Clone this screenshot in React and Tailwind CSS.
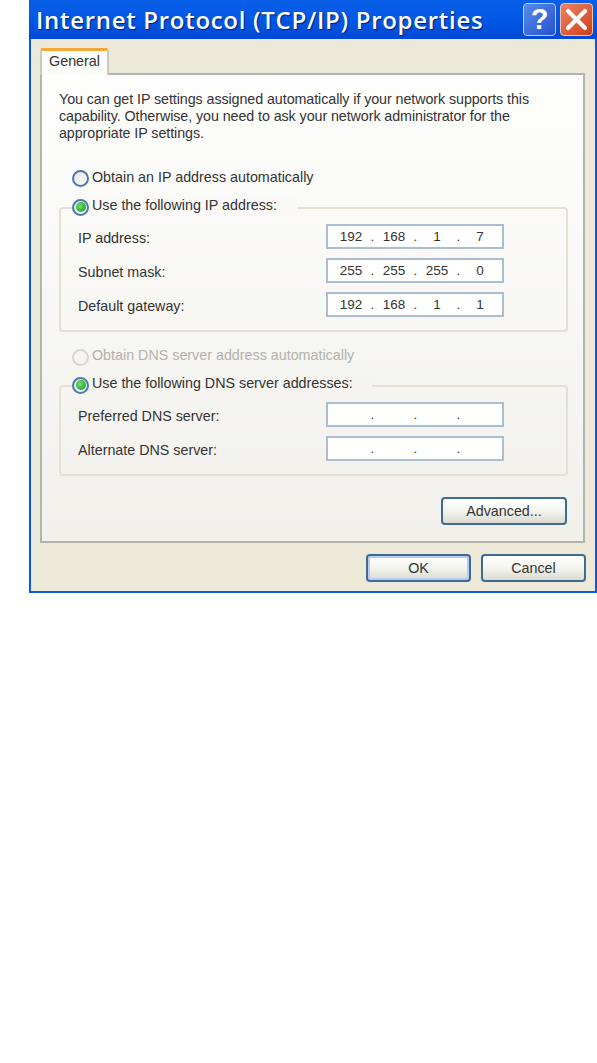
const font = { fontFamily: '"Liberation Sans", Arial, sans-serif' };

function Radio({ checked, disabled }) {
  const ring = disabled ? "border-[#d8d7ce]" : "border-[#4d7aa8]";
  const fill = disabled ? "bg-[#f5f4f0]" : "bg-gradient-to-br from-[#e4e3da] to-white";
  return (
    <span className={`flex h-[17px] w-[17px] shrink-0 items-center justify-center rounded-full border-2 ${ring} ${fill}`}>
      {checked && <span className="h-[10px] w-[10px] rounded-full bg-[radial-gradient(circle_at_40%_40%,#6fe06f,#23a82f_75%)]" />}
    </span>
  );
}

function IpField({ values }) {
  const cell = "w-[36px] text-center";
  const dot = "w-[7px] text-center";
  return (
    <div className="flex h-[25px] w-[178px] items-center border-2 border-[#a9bdd3] bg-white pl-[5px] text-[13.5px] text-[#333]">
      <span className={cell}>{values[0]}</span>
      <span className={dot}>.</span>
      <span className={cell}>{values[1]}</span>
      <span className={dot}>.</span>
      <span className={cell}>{values[2]}</span>
      <span className={dot}>.</span>
      <span className={cell}>{values[3]}</span>
    </div>
  );
}

function Row({ label, values }) {
  return (
    <div className="flex h-[25px] items-center justify-between pl-[17px] pr-[62px]">
      <span className="pt-[3px]">{label}</span>
      <IpField values={values} />
    </div>
  );
}

function Group({ legend, legendClass, rows, height }) {
  return (
    <div className="mr-[15px]">
      <div className="relative z-10 -mb-[9px] flex h-[18px] items-center pl-[13px]">
        <div className={`flex h-[18px] items-center gap-[3px] ${legendClass}`}>
          <Radio checked />
          <span className="whitespace-nowrap pb-[3px]">{legend}</span>
        </div>
      </div>
      <div className={`flex flex-col gap-[9px] rounded-[4px] border-2 border-[#e2e1d6] ${height}`}>
        {rows}
      </div>
    </div>
  );
}

function Btn({ children, className = "" }) {
  return (
    <button className={`flex items-center justify-center rounded-[4px] border-2 border-[#3d6a97] bg-gradient-to-b from-white via-[#f4f4ee] to-[#dcdad0] text-[14.3px] text-[#333] ${className}`}>
      {children}
    </button>
  );
}

export default function App() {
  return (
    <div className="h-[1063px] w-[597px] bg-white text-[14.3px] leading-[17px] text-[#333]" style={font}>
      <div className="ml-[29px] flex h-[593px] w-[568px] flex-col border-x-2 border-b-2 border-[#0a57e6] bg-[#ece9d8]">
        <div className="-mx-[2px] flex h-[39px] shrink-0 items-center justify-between bg-gradient-to-b from-[#0a5fe8] via-[#0257e6] to-[#0048d6] pl-[7px] pr-[4px]">
          <span
            className="whitespace-nowrap text-[24px] font-semibold leading-[39px] tracking-[0.7px] text-white [text-shadow:1px_1px_1px_#00237a]"
            style={{ fontFamily: '"Open Sans", sans-serif' }}
          >
            Internet Protocol (TCP/IP) Properties
          </span>
          <div className="flex gap-[4px]">
            <div className="flex h-[33px] w-[33px] items-center justify-center rounded-[4px] border border-[#b9cdf5] bg-gradient-to-br from-[#5b8bee] to-[#2350cf]">
              <span className="text-[29px] font-bold leading-none text-white" style={font}>?</span>
            </div>
            <div className="flex h-[33px] w-[33px] items-center justify-center rounded-[4px] border border-[#f0c2b0] bg-gradient-to-br from-[#ed8263] to-[#ce3c10]">
              <svg width="23" height="23" viewBox="0 0 23 23">
                <path d="M3 3 L20 20 M20 3 L3 20" stroke="#fff" strokeWidth="4.2" strokeLinecap="round" />
              </svg>
            </div>
          </div>
        </div>

        <div className="ml-[9px] mr-[10px] mt-[9px] flex h-[495px] flex-col">
          <div className="relative z-10 -mb-[2px] flex h-[27px] w-[69px] items-center justify-center rounded-t-[3px] border-x-2 border-t-[3px] border-[#c9c9bf] border-t-[#f4a836] bg-[#fbfbf9] pb-[4px]">
            General
          </div>
          <div className="flex h-[470px] flex-col border-2 border-[#b0b5b0] bg-gradient-to-b from-[#fefefd] to-[#f1f0eb] pl-[17px] pt-[16px]">
            <p className="whitespace-nowrap text-[14.3px] leading-[17px] tracking-[-0.08px]">
              You can get IP settings assigned automatically if your network supports this
              <br />
              capability. Otherwise, you need to ask your network administrator for the
              <br />
              appropriate IP settings.
            </p>
            <div className="mb-[11px] ml-[13px] mt-[27px] flex h-[18px] items-center gap-[3px]">
              <Radio />
              <span className="pb-[2px]">Obtain an IP address automatically</span>
            </div>
            <Group
              legend="Use the following IP address:"
              legendClass="w-[225px] bg-[#faf9f7]"
              height="h-[125px] pt-[15px]"
              rows={
                <>
                  <Row label="IP address:" values={["192", "168", "1", "7"]} />
                  <Row label="Subnet mask:" values={["255", "255", "255", "0"]} />
                  <Row label="Default gateway:" values={["192", "168", "1", "1"]} />
                </>
              }
            />
            <div className="mb-[10px] ml-[13px] mt-[16px] flex h-[18px] items-center gap-[3px] text-[#b3b2a8]">
              <Radio disabled />
              <span className="pb-[3px]">Obtain DNS server address automatically</span>
            </div>
            <Group
              legend="Use the following DNS server addresses:"
              legendClass="w-[300px] bg-[#f5f4f0]"
              height="h-[91px] pt-[15px]"
              rows={
                <>
                  <Row label="Preferred DNS server:" values={["", "", "", ""]} />
                  <Row label="Alternate DNS server:" values={["", "", "", ""]} />
                </>
              }
            />
            <div className="mr-[16px] mt-[21px] flex justify-end">
              <Btn className="h-[28px] w-[126px]">Advanced...</Btn>
            </div>
          </div>
        </div>

        <div className="mr-[9px] mt-[11px] flex justify-end gap-[10px]">
          <Btn className="h-[28px] w-[105px] shadow-[inset_0_0_0_2px_#b6cdf2]">OK</Btn>
          <Btn className="h-[28px] w-[105px]">Cancel</Btn>
        </div>
      </div>
    </div>
  );
}
